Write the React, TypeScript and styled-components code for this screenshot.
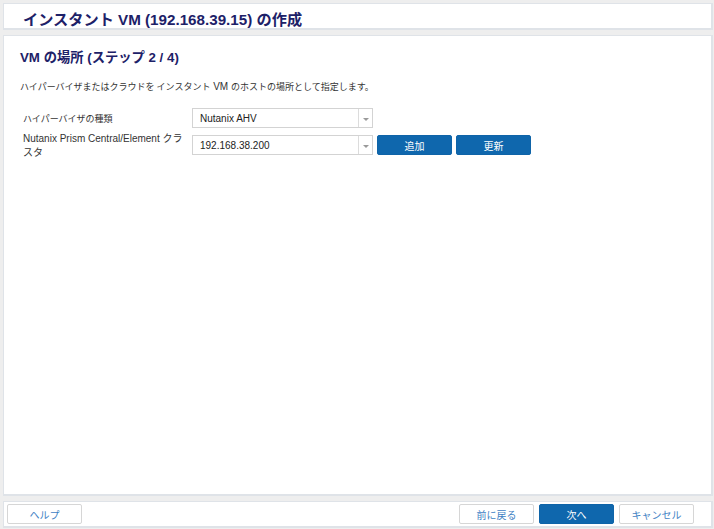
import styled, { createGlobalStyle } from 'styled-components';

const Global = createGlobalStyle`
  html, body {
    margin: 0;
    padding: 0;
    background: #eeeeee;
  }
  body {
    font-family: "Liberation Sans", "Noto Sans CJK JP", sans-serif;
    color: #333;
  }
`;

const Page = styled.div`
  height: 529px;
  box-sizing: border-box;
  padding: 3px 1px 1px 3px;
  display: flex;
  flex-direction: column;
  gap: 5px;
`;

const Panel = styled.div`
  background: #fff;
  border: 1px solid #dfe3e8;
  border-right-width: 2px;
  border-bottom-width: 2px;
  box-sizing: border-box;
`;

const TitleBar = styled(Panel)`
  height: 27px;
  display: flex;
  align-items: center;
  padding: 3px 0 0 19px;
`;

const Title = styled.h1`
  margin: 0;
  font-size: 15.2px;
  font-weight: bold;
  color: #1d2168;
`;

const Content = styled(Panel)`
  flex: 1;
  padding: 14px 16px;
`;

const Heading = styled.h2`
  margin: 0;
  font-size: 13.3px;
  line-height: 16px;
  font-weight: bold;
  color: #1d2168;
`;

// Japanese runs are set a little narrower than the latin text
const Ja = styled.span`
  font-family: "Noto Sans CJK JP", sans-serif;
  font-size: 9px;
`;

const Description = styled.p`
  margin: 15px 0 0;
  font-size: 10px;
  line-height: 12px;
  color: #333;
`;

const Form = styled.div`
  margin: 15px 0 0 3px;
  display: grid;
  grid-template-columns: 169px auto;
  row-gap: 7px;
  align-items: start;
`;

const Label = styled.div<{ $wrapped?: boolean }>`
  font-size: 10px;
  line-height: 13.5px;
  width: 162px;
  padding-top: ${p => (p.$wrapped ? '0' : '4px')};
  margin-top: ${p => (p.$wrapped ? '-3px' : '0')};
  color: #333;
`;

const Controls = styled.div`
  display: flex;
  gap: 4px;
  align-items: center;
`;

const Select = styled.div`
  width: 181px;
  height: 20px;
  box-sizing: border-box;
  border: 1px solid #d3d3d3;
  display: flex;
  align-items: center;
  background: #fff;
`;

const SelectValue = styled.span`
  flex: 1;
  padding-left: 7px;
  font-size: 10px;
  color: #222;
`;

const Arrow = styled.span`
  width: 13px;
  height: 100%;
  border-left: 1px solid #dcdcdc;
  display: flex;
  align-items: center;
  justify-content: center;
  &::after {
    content: '';
    margin-top: 3px;
    border-left: 3px solid transparent;
    border-right: 3px solid transparent;
    border-top: 3px solid #9a9a9a;
  }
`;

const Button = styled.button<{ $primary?: boolean }>`
  width: 75px;
  height: 20px;
  box-sizing: border-box;
  border-radius: 2px;
  font-family: inherit;
  font-size: 10px;
  cursor: pointer;
  padding: 0;
  border: 1px solid ${p => (p.$primary ? '#0f64a8' : '#d6d6d6')};
  background: ${p => (p.$primary ? '#0f67ad' : '#fff')};
  color: ${p => (p.$primary ? '#fff' : '#3f82c4')};
`;

const Footer = styled(Panel)`
  height: 27px;
  display: flex;
  align-items: center;
  justify-content: space-between;
  padding: 0 17px 0 3px;
`;

const ButtonGroup = styled.div`
  display: flex;
  gap: 5px;
`;

export default function App() {
  return (
    <>
      <Global />
      <Page>
        <TitleBar>
          <Title>インスタント VM (192.168.39.15) の作成</Title>
        </TitleBar>
        <Content>
          <Heading>VM の場所 (ステップ 2 / 4)</Heading>
          <Description>
            <Ja>ハイパーバイザまたはクラウドを インスタント</Ja> VM <Ja>のホストの場所として指定します。</Ja>
          </Description>
          <Form>
            <Label><Ja>ハイパーバイザの種類</Ja></Label>
            <Controls>
              <Select>
                <SelectValue>Nutanix AHV</SelectValue>
                <Arrow />
              </Select>
            </Controls>
            <Label $wrapped>Nutanix Prism Central/Element クラスタ</Label>
            <Controls>
              <Select>
                <SelectValue>192.168.38.200</SelectValue>
                <Arrow />
              </Select>
              <Button $primary>追加</Button>
              <Button $primary>更新</Button>
            </Controls>
          </Form>
        </Content>
        <Footer>
          <Button>ヘルプ</Button>
          <ButtonGroup>
            <Button>前に戻る</Button>
            <Button $primary>次へ</Button>
            <Button>キャンセル</Button>
          </ButtonGroup>
        </Footer>
      </Page>
    </>
  );
}
